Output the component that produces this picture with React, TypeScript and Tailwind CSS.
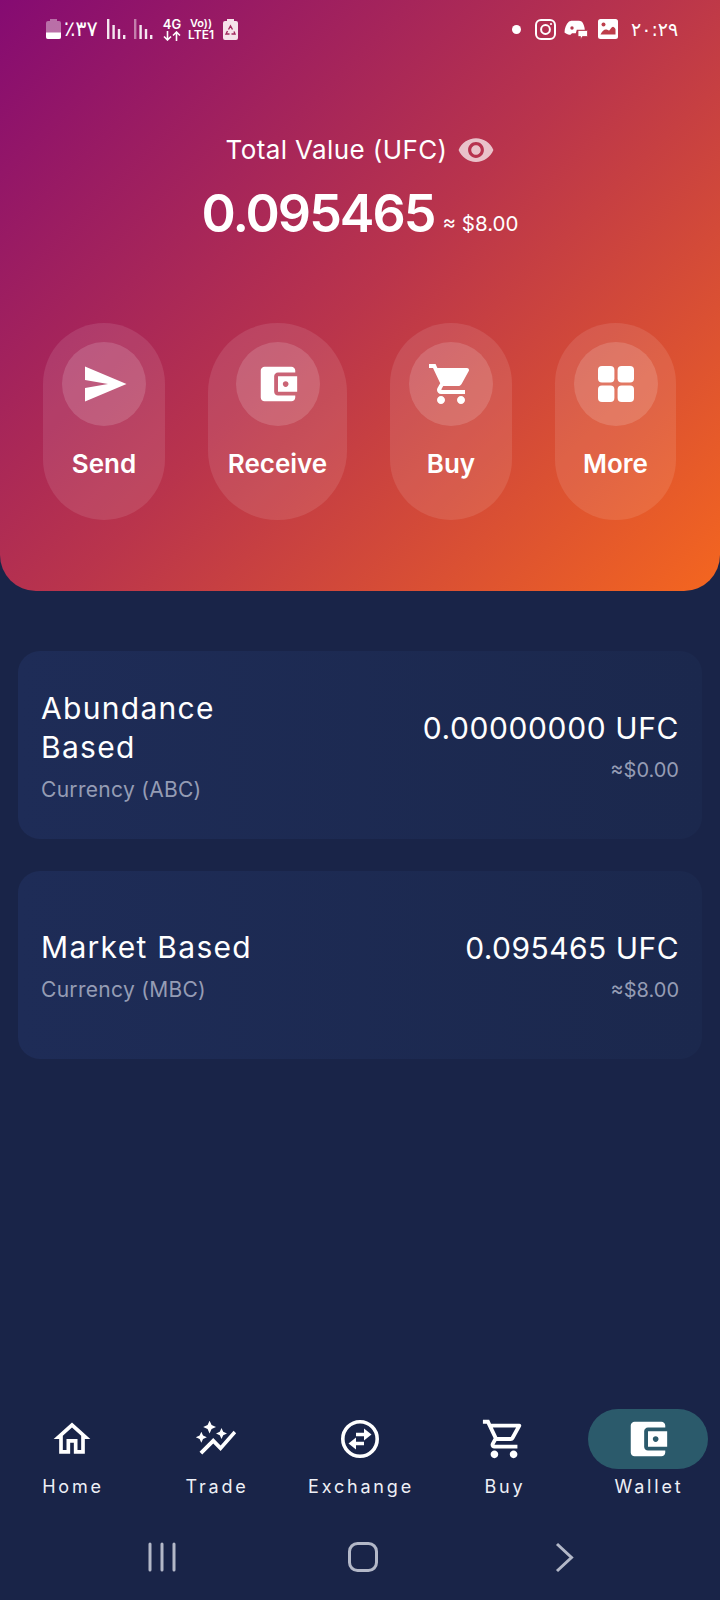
import React from "react";

const WALLET = "M21 18v1c0 1.1-.9 2-2 2H5c-1.11 0-2-.9-2-2V5c0-1.1.89-2 2-2h14c1.1 0 2 .9 2 2v1h-9c-1.11 0-2 .9-2 2v8c0 1.1.89 2 2 2h9zm-9-2h10V8H12v8zm4-2.5c-.83 0-1.5-.67-1.5-1.5s.67-1.5 1.5-1.5 1.5.67 1.5 1.5-.67 1.5-1.5 1.5z";
const CART_FILLED = "M7 18c-1.1 0-1.99.9-1.99 2S5.9 22 7 22s2-.9 2-2-.9-2-2-2zM1 2v2h2l3.6 7.59-1.35 2.45c-.16.28-.25.61-.25.96 0 1.1.9 2 2 2h12v-2H7.42c-.14 0-.25-.11-.25-.25l.03-.12.9-1.63h7.45c.75 0 1.41-.41 1.75-1.03l3.58-6.49c.08-.14.12-.31.12-.48 0-.55-.45-1-1-1H5.21l-.94-2H1zm16 16c-1.1 0-1.99.9-1.99 2s.89 2 1.99 2 2-.9 2-2-.9-2-2-2z";
const CART_OUTLINE = "M15.55 13c.75 0 1.41-.41 1.75-1.03l3.58-6.49c.37-.66-.11-1.48-.87-1.48H5.21l-.94-2H1v2h2l3.6 7.59-1.35 2.44C4.52 15.37 5.48 17 7 17h12v-2H7l1.1-2h7.45zM6.16 6h12.15l-2.76 5H8.53L6.16 6zM7 18c-1.1 0-1.99.9-1.99 2S5.9 22 7 22s2-.9 2-2-.9-2-2-2zm10 0c-1.1 0-1.99.9-1.99 2s.89 2 1.99 2 2-.9 2-2-.9-2-2-2z";
const HOME = "M12 5.69l5 4.5V18h-2v-6H9v6H7v-7.81l5-4.5M12 3L2 12h3v8h6v-6h2v6h6v-8h3L12 3z";
const GRAPH = "M14.06 9.94L12 9l2.06-.94L15 6l.94 2.06L18 9l-2.06.94L15 12l-.94-2.06zM4 14l.94-2.06L7 11l-2.06-.94L4 8l-.94 2.06L1 11l2.06.94L4 14zm4.5-5l1.09-2.41L12 5.5 9.59 4.41 8.5 2 7.41 4.41 5 5.5l2.41 1.09L8.5 9zm-4 11.5l6-6.01 4 4L23 8.93l-1.41-1.41-7.09 7.97-4-4L3 19l1.5 1.5z";
const EYE = "M12 4.5C7 4.5 2.73 7.61 1 12c1.73 4.39 6 7.5 11 7.5s9.27-3.11 11-7.5c-1.73-4.39-6-7.5-11-7.5zM12 17c-2.76 0-5-2.24-5-5s2.24-5 5-5 5 2.24 5 5-2.24 5-5 5zm0-8c-1.66 0-3 1.34-3 3s1.34 3 3 3 3-1.34 3-3-1.34-3-3-3z";

function Mi({ d, size, className = "" }: { d: string; size: number; className?: string }) {
  return (
    <svg width={size} height={size} viewBox="0 0 24 24" fill="currentColor" className={className}>
      <path d={d} />
    </svg>
  );
}

function SendIcon() {
  return (
    <svg width="42" height="36" viewBox="0 0 42 36" fill="currentColor" className="ml-[3px]">
      <path d="M0 .5 41.5 18 0 35.5V22l23-4L0 14z" />
    </svg>
  );
}

function GridIcon() {
  return (
    <svg width="36" height="36" viewBox="0 0 36 36" fill="currentColor">
      <rect width="16.4" height="16.4" rx="4" />
      <rect x="19.6" width="16.4" height="16.4" rx="4" />
      <rect y="19.6" width="16.4" height="16.4" rx="4" />
      <rect x="19.6" y="19.6" width="16.4" height="16.4" rx="4" />
    </svg>
  );
}

function ExchangeIcon() {
  return (
    <svg width="40" height="40" viewBox="0 0 40 40" fill="none" stroke="currentColor">
      <circle cx="20" cy="20" r="17.2" strokeWidth="3.6" />
      <path d="M24 9.500l7.500 6-7.500 6z" fill="currentColor" stroke="none" />
      <path d="M16 18.500l-7.500 6 7.500 6z" fill="currentColor" stroke="none" />
      <path d="M16 15.500h9M15 24.500h9" strokeWidth="3.4" />
    </svg>
  );
}

function Signal({ dim = false }: { dim?: boolean }) {
  return (
    <svg width="19" height="20" viewBox="0 0 19 20" fill="currentColor">
      <rect x="0" y="0" width="2.4" height="20" opacity={dim ? 0.45 : 0.9} />
      <rect x="5.4" y="6" width="2.4" height="14" opacity="0.9" />
      <rect x="10.8" y="10" width="2.4" height="10" opacity="0.9" />
      <rect x="16" y="16" width="2.4" height="4" opacity="0.9" />
    </svg>
  );
}

function Arrows() {
  return (
    <svg width="18" height="10" viewBox="0 0 18 10" fill="none" stroke="currentColor" strokeWidth="1.6">
      <path d="M4.500 0v9M1 5.500l3.500 3.500L8 5.500M13.500 10V1M10 4.500 13.500 1 17 4.500" />
    </svg>
  );
}

function BatteryLow() {
  return (
    <svg width="15" height="20" viewBox="0 0 15 20">
      <path d="M4 0h7v2h2a2 2 0 0 1 2 2v14a2 2 0 0 1-2 2H2a2 2 0 0 1-2-2V4a2 2 0 0 1 2-2h2z" fill="#fff" opacity="0.4" />
      <path d="M0 13.500h15V18a2 2 0 0 1-2 2H2a2 2 0 0 1-2-2z" fill="#fff" />
    </svg>
  );
}

function BatteryRecycle() {
  return (
    <svg width="15" height="21" viewBox="0 0 15 21">
      <path d="M4 0h7v2h2a2 2 0 0 1 2 2v15a2 2 0 0 1-2 2H2a2 2 0 0 1-2-2V4a2 2 0 0 1 2-2h2z" fill="#f6e3ea" />
      <path d="M5.500 10.500 7.500 7l2 3.500M11 12.500l1 2.500H8.500M6.500 15H3l1.500-3" stroke="#a22a5e" strokeWidth="1.400" fill="none" />
    </svg>
  );
}

function Instagram() {
  return (
    <svg width="21" height="21" viewBox="0 0 21 21" fill="none" stroke="#fff" strokeWidth="2">
      <rect x="1" y="1" width="19" height="19" rx="5" />
      <circle cx="10.500" cy="10.500" r="4.400" />
      <circle cx="16" cy="5" r="1.100" fill="#fff" stroke="none" />
    </svg>
  );
}

function Discord() {
  return (
    <svg width="24" height="21" viewBox="0 0 24 21" fill="#fff">
      <path d="M5 2.500c2-1 3-1 4-.7h4.500c1.500-.3 3-.1 4.500.9 1.600 2.200 2.600 5 2.800 8h-8l-1 3.600H8l-1.500 1.400c-2 0-4-.7-6-2.300C.7 9 2 5.500 5 2.500z" />
      <circle cx="8" cy="9" r="1.700" fill="#b53a4e" />
      <path d="M14 11.500h9.500v6h-5l-2 3v-3H14z" stroke="#b53a4e" strokeWidth="0.800" />
    </svg>
  );
}

function ImageGlyph() {
  return (
    <svg width="20" height="20" viewBox="0 0 20 20">
      <rect width="20" height="20" rx="2.500" fill="#fff" />
      <circle cx="5.500" cy="5.500" r="2" fill="#bd3d4a" />
      <path d="M2.500 15.500c2-4 4-5.500 6-5 1.500.4 2 1.500 3 .7 1.500-2.500 3-3.500 3.500-3.500s2 1 2.500 2.500v5.300z" fill="#bd3d4a" />
    </svg>
  );
}

function Action({ label, width, icon }: { label: string; width: string; icon: React.ReactNode }) {
  return (
    <div className={`${width} h-[197px] rounded-full bg-white/10 flex flex-col items-center pt-[19px]`}>
      <div className="w-[84px] h-[84px] rounded-full bg-white/15 flex items-center justify-center text-white">{icon}</div>
      <div className="mt-[20px] text-[26px] leading-[36px] font-semibold text-white">{label}</div>
    </div>
  );
}

function Card({ title, sub, amount, usd, amountTrack }: { title: React.ReactNode; sub: string; amount: string; usd: string; amountTrack: string }) {
  return (
    <div className="h-[188px] rounded-[22px] bg-gradient-to-r from-[#1e2c57] to-[#1b284d] px-[23px] flex items-center justify-between">
      <div className="flex flex-col pt-[3px]">
        <div className="text-[30px] leading-[39px] text-white tracking-[1.3px]">{title}</div>
        <div className="mt-[8px] text-[21px] leading-[30px] text-[#959cb4] tracking-[0.3px]">{sub}</div>
      </div>
      <div className="flex flex-col items-end pt-[4px]">
        <div className={`text-[30px] leading-[38px] text-white ${amountTrack}`}>{amount}</div>
        <div className="mt-[8px] text-[20px] leading-[30px] text-[#959cb4]">{usd}</div>
      </div>
    </div>
  );
}

function NavItem({ label, icon, active = false }: { label: string; icon: React.ReactNode; active?: boolean }) {
  return (
    <div className="flex flex-col items-center">
      <div className={`w-[120px] h-[60px] rounded-full flex items-center justify-center text-white ${active ? "bg-[#2b5a6b]" : ""}`}>{icon}</div>
      <div className="mt-[6px] text-[18px] leading-[24px] text-[#eef0f6] tracking-[2.8px] pl-[2px]">{label}</div>
    </div>
  );
}

export default function App() {
  return (
    <div className="w-[720px] h-[1600px] bg-[#192448] flex flex-col overflow-hidden font-['Inter',sans-serif]">
      <header className="h-[591px] shrink-0 rounded-b-[36px] bg-[linear-gradient(135deg,#850b72_0%,#b9344c_50%,#f4661f_100%)] flex flex-col">
        <div className="h-[58px] pl-[46px] pr-[44px] flex items-center justify-between text-white">
          <div className="flex items-center">
            <BatteryLow />
            <span className="ml-[3px] text-[21px] leading-[24px] font-['DejaVu_Sans',sans-serif] w-[36px]">٪۳۷</span>
            <span className="ml-[7px] flex"><Signal /></span>
            <span className="ml-[8px] flex"><Signal dim /></span>
            <span className="ml-[10px] flex flex-col items-center w-[18px]">
              <span className="text-[13px] leading-[13px] font-semibold">4G</span>
              <Arrows />
            </span>
            <span className="ml-[7px] flex flex-col items-center w-[26px] text-[11px] leading-[11px] font-semibold">
              <span>Vo))</span>
              <span className="text-[12px] leading-[12px]">LTE1</span>
            </span>
            <span className="ml-[9px] flex"><BatteryRecycle /></span>
          </div>
          <div className="flex items-center">
            <span className="w-[9px] h-[9px] rounded-full bg-white" />
            <span className="ml-[14px] flex"><Instagram /></span>
            <span className="ml-[8px] flex"><Discord /></span>
            <span className="ml-[10px] flex"><ImageGlyph /></span>
            <span className="ml-[13px] text-[19px] leading-[24px] font-['DejaVu_Sans',sans-serif] w-[45px] whitespace-nowrap">۲۰:۲۹</span>
          </div>
        </div>
        <div className="mt-[74px] h-[36px] flex items-center justify-center">
          <span className="text-[26px] leading-[36px] text-white tracking-[0.4px]">Total Value (UFC)</span>
          <Mi d={EYE} size={38} className="ml-[9px] text-white/70" />
        </div>
        <div className="mt-[14px] h-[64px] flex items-end justify-center">
          <span className="text-[52px] leading-[64px] font-semibold text-white tracking-[-2px]">0.095465</span>
          <span className="ml-[8px] mb-[8px] text-[20.5px] leading-[28px] text-white">≈ $8.00</span>
        </div>
        <div className="mt-[77px] pl-[43px] flex gap-[43px]">
          <Action label="Send" width="w-[122px]" icon={<SendIcon />} />
          <Action label="Receive" width="w-[139px]" icon={<Mi d={WALLET} size={46} />} />
          <Action label="Buy" width="w-[122px]" icon={<Mi d={CART_FILLED} size={48} />} />
          <Action label="More" width="w-[121px]" icon={<GridIcon />} />
        </div>
      </header>

      <main className="mt-[60px] px-[18px] flex flex-col gap-[32px]">
        <Card title={<>Abundance<br />Based</>} sub="Currency (ABC)" amount="0.00000000 UFC" usd="≈$0.00" amountTrack="tracking-[0.6px]" />
        <Card title="Market Based" sub="Currency (MBC)" amount="0.095465 UFC" usd="≈$8.00" amountTrack="tracking-[0.45px]" />
      </main>

      <nav className="mt-[350px] grid grid-cols-5">
        <NavItem label="Home" icon={<Mi d={HOME} size={44} />} />
        <NavItem label="Trade" icon={<Mi d={GRAPH} size={44} />} />
        <NavItem label="Exchange" icon={<ExchangeIcon />} />
        <NavItem label="Buy" icon={<Mi d={CART_OUTLINE} size={46} />} />
        <NavItem label="Wallet" icon={<Mi d={WALLET} size={46} />} active />
      </nav>

      <div className="mt-[42px] h-[32px] flex items-center text-[#b3b8c8]">
        <div className="w-[148px]" />
        <svg width="28" height="30" viewBox="0 0 28 30" stroke="currentColor" strokeWidth="3" strokeLinecap="round">
          <path d="M2 2v26M14 2v26M26 2v26" />
        </svg>
        <div className="w-[172px]" />
        <svg width="30" height="30" viewBox="0 0 30 30" fill="none" stroke="currentColor" strokeWidth="3">
          <rect x="1.500" y="1.500" width="27" height="27" rx="8" />
        </svg>
        <div className="w-[177px]" />
        <svg width="19" height="31" viewBox="0 0 19 31" fill="none" stroke="currentColor" strokeWidth="3">
          <path d="M2 2l14.500 13.500L2 29" />
        </svg>
      </div>
    </div>
  );
}
